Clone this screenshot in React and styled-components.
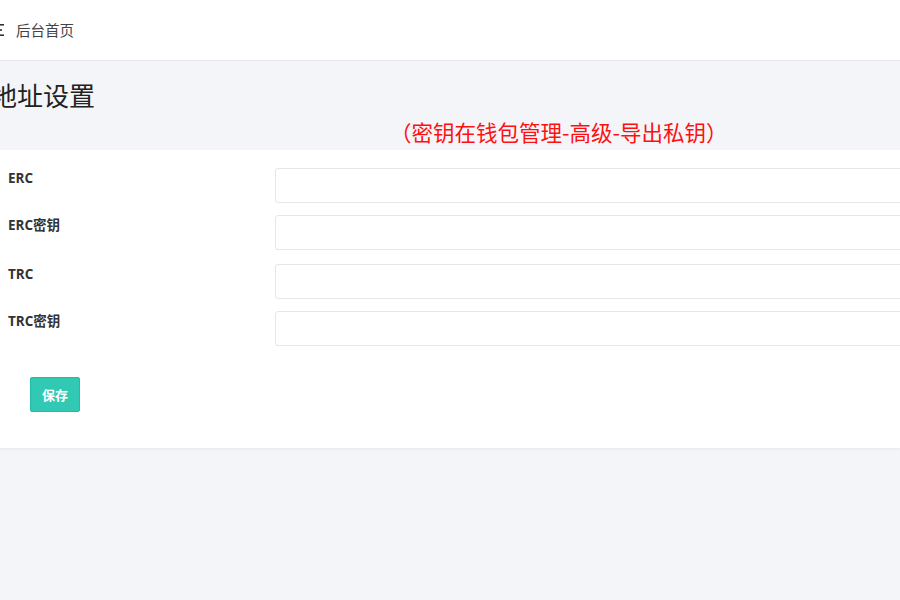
import React from 'react';
import styled, { createGlobalStyle } from 'styled-components';

const Global = createGlobalStyle`
    html, body {
        margin: 0;
        padding: 0;
        background: #f4f5f9;
        overflow: hidden;
    }
    * { box-sizing: border-box; }
`

const Page = styled.div`
    width: 900px;
    height: 600px;
    overflow: hidden;
    font-family: "Open Sans", "Noto Sans CJK SC", sans-serif;
    color: #333;
`

const Header = styled.div`
    height: 61px;
    background: #fff;
    border-bottom: 1px solid #e7e9ee;
    display: flex;
    align-items: center;
    margin-left: -12px;
    gap: 12px;
    font-size: 14.5px;
    color: #444;
`

const Crumb = styled.span`
    font-family: "Noto Sans CJK SC", sans-serif;
    margin-top: -1px;
`

const Heading = styled.div`
    height: 89px;
`

const Title = styled.h1`
    margin: 0;
    padding-top: 16px;
    margin-left: -9px;
    font-size: 26px;
    font-weight: 400;
    line-height: 36px;
    color: #222;
    font-family: "Noto Sans CJK SC", sans-serif;
`

const Note = styled.div`
    margin-left: 390px;
    margin-top: 5px;
    font-size: 21.5px;
    line-height: 28px;
    color: #ff1010;
    font-family: "Noto Sans CJK SC", sans-serif;
    white-space: nowrap;
`

const Panel = styled.div`
    background: #fff;
    padding: 18px 0 36px 8px;
    box-shadow: 0 2px 2px rgba(0, 0, 0, 0.04);
`

const Row = styled.div`
    display: flex;
    align-items: flex-start;
    margin-bottom: ${p => p.$gap}px;
`

const Label = styled.label`
    width: 267px;
    flex-shrink: 0;
    font-size: 13.5px;
    font-weight: 700;
    padding-top: 1px;
    line-height: 18px;
    color: #333;
`

const Input = styled.input`
    flex: 1;
    height: 35px;
    margin-right: -10px;
    border: 1px solid #e5e6e7;
    border-radius: 3px;
    background: #fff;
    outline: none;
`

const Button = styled.button`
    margin-top: 31px;
    margin-left: 22px;
    width: 50px;
    height: 35px;
    background: #31c8b4;
    border: 1px solid #23bba7;
    border-radius: 2px;
    color: #fff;
    font-size: 13px;
    font-weight: 700;
    font-family: "Noto Sans CJK SC", sans-serif;
`

const fields = [
    { label: 'ERC', gap: 12 },
    { label: 'ERC密钥', gap: 14 },
    { label: 'TRC', gap: 12 },
    { label: 'TRC密钥', gap: 0 },
];

const App = () => {
    return (
        <Page>
            <Global />
            <Header>
                <svg width="16" height="12" viewBox="0 0 16 12">
                    <rect x="0" y="0" width="16" height="1.6" fill="#333" />
                    <rect x="0" y="5.2" width="14" height="1.6" fill="#333" />
                    <rect x="0" y="10.4" width="16" height="1.6" fill="#333" />
                </svg>
                <Crumb>后台首页</Crumb>
            </Header>
            <Heading>
                <Title>地址设置</Title>
                <Note>（密钥在钱包管理-高级-导出私钥）</Note>
            </Heading>
            <Panel>
                {fields.map(f => (
                    <Row key={f.label} $gap={f.gap}>
                        <Label>{f.label}</Label>
                        <Input type="text" />
                    </Row>
                ))}
                <Button>保存</Button>
            </Panel>
        </Page>
    );
};

export default App;
